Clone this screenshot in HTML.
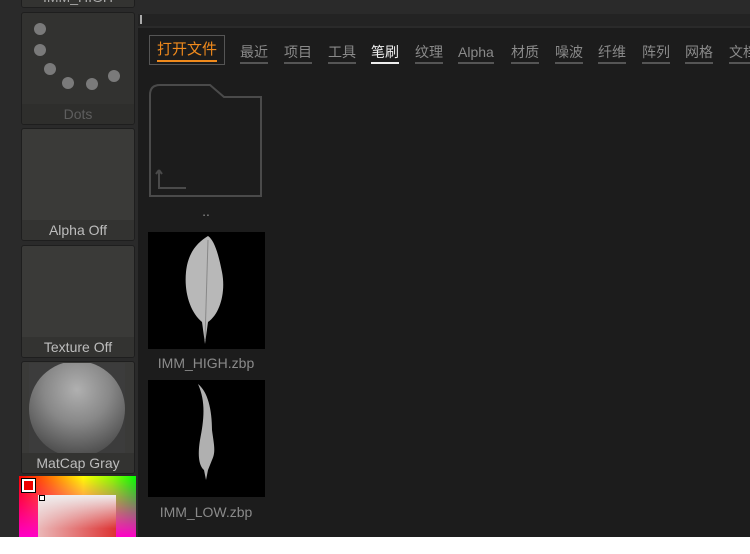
<!DOCTYPE html>
<html><head><meta charset="utf-8"><style>
*{margin:0;padding:0;box-sizing:border-box}
body{width:750px;height:554px;background:#fff;position:relative;overflow:hidden;font-family:"Liberation Sans","Noto Sans CJK SC",sans-serif}
.app{position:absolute;left:0;top:0;width:750px;height:537px;background:#2a2a2a;overflow:hidden}
.tile{position:absolute;left:21px;width:114px;background:#3a3a38;border:1px solid #1e1e1e;border-radius:3px;overflow:hidden}
.tile .lb{position:absolute;left:0;right:0;bottom:0;height:20px;background:#333331;color:#bdbdbd;font-size:14px;text-align:center;line-height:20px}
.main{position:absolute;left:138px;top:28px;width:612px;height:509px;background:#1c1c1c}
.strip{position:absolute;left:138px;top:14px;width:612px;height:12px;background:#232323}
.tab{position:absolute;top:43px;color:#8a8a8a;font-size:14px;border-bottom:2px solid #555;line-height:18px;padding-bottom:1px;white-space:nowrap}
.lab{position:absolute;color:#8a8a8a;font-size:14px;width:140px;text-align:center}
.thumb{position:absolute;left:148px;width:117px;height:117px;background:#000}
</style></head><body>
<div class="app">
 <div class="tile" style="top:-20px;height:28px;background:#333331"><div class="lb" style="color:#aaa">IMM_HIGH</div></div>
 <div class="tile" style="top:12px;height:113px;background:#323230">
  <svg width="114" height="90" style="position:absolute;left:0;top:0"><g fill="#7a7a7a">
   <circle cx="18" cy="16" r="6"/><circle cx="18" cy="37" r="6"/><circle cx="28" cy="56" r="6"/><circle cx="46" cy="70" r="6"/><circle cx="70" cy="71" r="6"/><circle cx="92" cy="63" r="6"/></g></svg>
  <div class="lb" style="color:#5e5e5e;background:#2e2e2c">Dots</div></div>
 <div class="tile" style="top:128px;height:113px"><div class="lb">Alpha Off</div></div>
 <div class="tile" style="top:245px;height:113px"><div class="lb">Texture Off</div></div>
 <div class="tile" style="top:361px;height:113px">
  <div style="position:absolute;left:7px;top:1px;width:96px;height:92px;background:#3c3c3c;overflow:hidden"><div style="position:absolute;left:0;top:-2px;width:96px;height:96px;border-radius:50%;background:radial-gradient(circle at 50% 30%,#b0b0b0,#888 40%,#555 75%,#333)"></div></div>
  <div class="lb">MatCap Gray</div></div>
 <div style="position:absolute;left:19px;top:476px;width:117px;height:61px;background:linear-gradient(to right,#f00,#f80 30%,#ff0 55%,#8f0 80%,#0f0);">
  <div style="position:absolute;left:0;top:0;width:100%;height:100%;background:linear-gradient(to bottom,rgba(255,0,0,0),rgba(255,0,200,1))"></div>
  <div style="position:absolute;left:19px;top:19px;width:78px;height:42px;background:linear-gradient(to bottom,#eee,#d33 80%),#e00"></div>
  <div style="position:absolute;left:19px;top:19px;width:78px;height:42px;background:linear-gradient(to right,rgba(240,240,240,.7),rgba(255,0,0,0))"></div>
  <div style="position:absolute;left:3px;top:3px;width:13px;height:13px;background:#e00;border:2px solid #fff;outline:1px solid #000"></div>
  <div style="position:absolute;left:20px;top:19px;width:6px;height:6px;background:#fff;border:1px solid #000"></div>
 </div>
 <div class="strip"></div>
 <div style="position:absolute;left:140px;top:15px;width:2px;height:9px;background:#aaa"></div>
 <div class="main">
  <div style="position:absolute;left:11px;top:7px;width:76px;height:30px;border:1px solid #555"></div>
  <div class="tab" style="left:19px;top:13px;color:#f08a1c;border-color:#f08a1c;font-size:15px">打开文件</div>
 </div>
 <div class="tab" style="left:240px">最近</div>
 <div class="tab" style="left:284px">项目</div>
 <div class="tab" style="left:328px">工具</div>
 <div class="tab" style="left:371px;color:#eee;border-color:#eee">笔刷</div>
 <div class="tab" style="left:415px">纹理</div>
 <div class="tab" style="left:458px">Alpha</div>
 <div class="tab" style="left:511px">材质</div>
 <div class="tab" style="left:555px">噪波</div>
 <div class="tab" style="left:598px">纤维</div>
 <div class="tab" style="left:642px">阵列</div>
 <div class="tab" style="left:685px">网格</div>
 <div class="tab" style="left:729px">文档</div>
 <svg style="position:absolute;left:148px;top:83px" width="118" height="116"><path d="M2 12 Q2 2 12 2 H62 L76 14 H113 V113 H2 Z" fill="none" stroke="#4a4a4a" stroke-width="2"/><path d="M11 87 V105 H38 M11 87 l-3 4 M11 87 l3 4" fill="none" stroke="#4a4a4a" stroke-width="2"/></svg>
 <div class="lab" style="left:136px;top:203px">..</div>
 <div class="thumb" style="top:232px"><svg width="117" height="117"><path d="M60 4 C50 10 40 20 38 40 C36 60 42 80 54 90 L57 112 L60 90 C72 82 78 60 74 40 C70 20 66 8 60 4Z" fill="#b8b8b8"/><path d="M60 8 L57 108" stroke="#888" stroke-width="1"/></svg></div>
 <div class="lab" style="left:136px;top:355px">IMM_HIGH.zbp</div>
 <div class="thumb" style="top:380px"><svg width="117" height="117"><path d="M50 4 C60 12 64 30 64 50 C66 65 68 72 64 80 L60 90 L58 100 L56 90 C50 85 50 72 52 60 C56 40 58 22 50 4Z" fill="#b0b0b0"/></svg></div>
 <div class="lab" style="left:136px;top:504px">IMM_LOW.zbp</div>
</div>
</body></html>
